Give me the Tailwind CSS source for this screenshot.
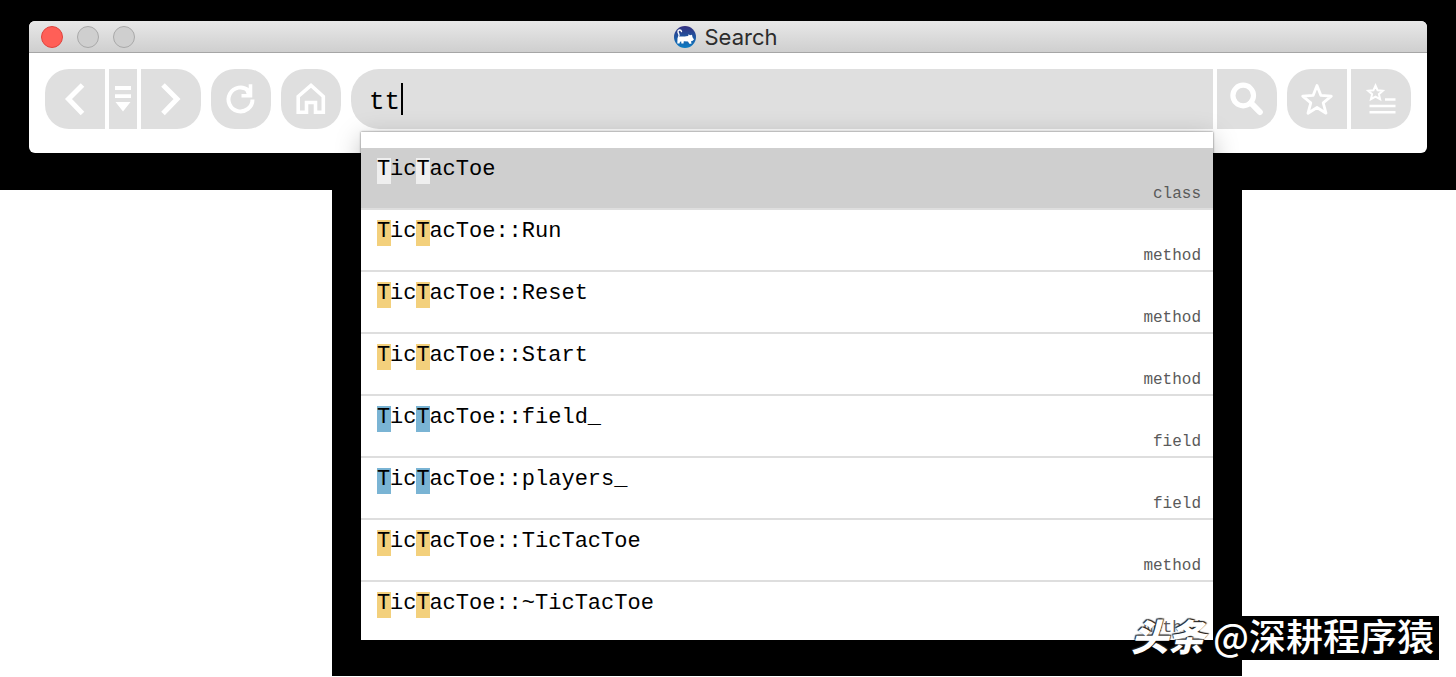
<!DOCTYPE html>
<html lang="en">
<head>
<meta charset="utf-8">
<title>Search</title>
<script src="https://cdn.jsdelivr.net/npm/@tailwindcss/browser@4"></script>
</head>
<body class="relative bg-white font-['Inter','Liberation_Sans',sans-serif] text-black">
<header class="h-[190px] bg-black px-[29px] pt-[21px]">
  <div class="h-[132px] rounded-[6px] bg-white">
    <div class="relative flex h-8 items-center justify-center gap-2 rounded-t-[6px] border-b border-[#a6a6a6] bg-linear-to-b from-[#e8e8e8] to-[#cfcfcf] pr-1">
      <div class="absolute left-3 flex gap-[14px]">
        <button aria-label="Close" class="size-[22px] rounded-full border border-[#e0443e] bg-[#ff5f57]"></button>
        <button aria-label="Minimize" class="size-[22px] rounded-full border border-[#a9a9a9] bg-[#cfcfcf]"></button>
        <button aria-label="Zoom" class="size-[22px] rounded-full border border-[#a9a9a9] bg-[#cfcfcf]"></button>
      </div>
      <svg class="size-[22px]" viewBox="0 0 22 22" aria-hidden="true">
        <defs><linearGradient id="logo" x1="0" y1="0" x2="0" y2="1"><stop offset="0" stop-color="#35307f"/><stop offset="1" stop-color="#0a7cc4"/></linearGradient></defs>
        <circle cx="11" cy="11" r="11" fill="url(#logo)"/>
        <path d="M7.500 5.500C7 3.300 3.800 3.600 4 6C4.200 8 6.300 8 4.500 11.500" fill="none" stroke="#fff" stroke-width="1.400" stroke-linecap="round"/>
        <path d="M3.500 12C5 9.500 9 11 12 10.300L14.200 10L14.500 8.300L16 9.300L18 8.800L18.500 11.200L20 13.500L18.300 15L17 15.200L17.500 17.700H15.300L14 15.500L9.800 15.200L9.500 17.500H7.300L7.300 15.500L6 15.800L5.500 17.500H3.300Z" fill="#fff"/>
      </svg>
      <h1 class="text-[22px] leading-none text-[#2c2c2c]">Search</h1>
    </div>
    <div class="flex gap-[10px] px-4 pt-4">
      <nav class="flex gap-1">
        <button aria-label="Back" class="size-[60px] rounded-l-[24px] bg-[#dfdfdf]">
          <svg class="size-[60px]" viewBox="0 0 60 60" fill="none" stroke="#fff" stroke-width="5"><path d="M37.500 16L23.500 30L37.500 44.500"/></svg>
        </button>
        <button aria-label="History" class="h-[60px] w-7 bg-[#dfdfdf]">
          <svg class="h-[60px] w-7" viewBox="0 0 28 60" fill="#fff"><path d="M6 17H22V21H6ZM6 25.300H22V29H6ZM6.500 33H21.500L14 42.500Z"/></svg>
        </button>
        <button aria-label="Forward" class="size-[60px] rounded-r-[24px] bg-[#dfdfdf]">
          <svg class="size-[60px]" viewBox="0 0 60 60" fill="none" stroke="#fff" stroke-width="5"><path d="M22 16L36 30L22 44.500"/></svg>
        </button>
      </nav>
      <button aria-label="Refresh" class="size-[60px] rounded-[24px] bg-[#dfdfdf]">
        <svg class="size-[60px]" viewBox="0 0 60 60" fill="none" stroke="#fff" stroke-width="4"><path d="M41.500 30.500A12 12 0 1 1 37.500 21.500"/><path d="M30.500 26.700H39.500V15.300" stroke-width="3.600"/><path d="M33 18L39 22V26H36Z" fill="#fff" stroke="none"/></svg>
      </button>
      <button aria-label="Home" class="size-[60px] rounded-[24px] bg-[#dfdfdf]">
        <svg class="size-[60px]" viewBox="0 0 60 60" fill="none" stroke="#fff" stroke-width="3.600"><path d="M17.200 43.200V27.500L30 16.500L42.300 27.500V43.200H34.500V33.500H25.500V43.200Z"/></svg>
      </button>
      <form class="relative flex min-w-0 flex-1 gap-1">
        <label class="flex h-[60px] min-w-0 flex-1 items-center rounded-l-[28px] bg-[#dfdfdf] pl-[18px]">
          <input aria-label="Search query" value="tt" class="h-[60px] w-8 pt-[6px] font-['Liberation_Mono',monospace] text-[26px] outline-none">
          <span class="h-8 w-[2px] bg-black"></span>
        </label>
        <button aria-label="Search" class="size-[60px] rounded-r-[24px] bg-[#dfdfdf]">
          <svg class="size-[60px]" viewBox="0 0 60 60" fill="none" stroke="#fff"><circle cx="26.200" cy="26.500" r="10.300" stroke-width="5.200"/><path d="M34 34L42.800 43" stroke-width="6" stroke-linecap="round"/></svg>
        </button>
        <ul class="absolute top-[63px] right-16 left-[10px] z-10 h-[508px] overflow-hidden bg-white pt-4 font-['Liberation_Mono',monospace] text-[22px] shadow-[0_0_2px_rgba(0,0,0,0.6),0_6px_24px_rgba(0,0,0,0.25)]">
          <li class="flex h-[62px] justify-between border-b-2 border-[#dedede] bg-[#cfcfcf] pt-[10px] pr-3 pl-4"><p class="leading-6"><mark class="-mr-px inline-block h-[26px] w-[14px] bg-[#efefef]">T</mark>ic<mark class="-mr-px inline-block h-[26px] w-[14px] bg-[#efefef]">T</mark>acToe</p><span class="self-end pb-[2px] text-base text-[#5a5a5a]">class</span></li>
          <li class="flex h-[62px] justify-between border-b-2 border-[#dedede] pt-[10px] pr-3 pl-4"><p class="leading-6"><mark class="-mr-px inline-block h-[26px] w-[14px] bg-[#f3d07c]">T</mark>ic<mark class="-mr-px inline-block h-[26px] w-[14px] bg-[#f3d07c]">T</mark>acToe::Run</p><span class="self-end pb-[2px] text-base text-[#5a5a5a]">method</span></li>
          <li class="flex h-[62px] justify-between border-b-2 border-[#dedede] pt-[10px] pr-3 pl-4"><p class="leading-6"><mark class="-mr-px inline-block h-[26px] w-[14px] bg-[#f3d07c]">T</mark>ic<mark class="-mr-px inline-block h-[26px] w-[14px] bg-[#f3d07c]">T</mark>acToe::Reset</p><span class="self-end pb-[2px] text-base text-[#5a5a5a]">method</span></li>
          <li class="flex h-[62px] justify-between border-b-2 border-[#dedede] pt-[10px] pr-3 pl-4"><p class="leading-6"><mark class="-mr-px inline-block h-[26px] w-[14px] bg-[#f3d07c]">T</mark>ic<mark class="-mr-px inline-block h-[26px] w-[14px] bg-[#f3d07c]">T</mark>acToe::Start</p><span class="self-end pb-[2px] text-base text-[#5a5a5a]">method</span></li>
          <li class="flex h-[62px] justify-between border-b-2 border-[#dedede] pt-[10px] pr-3 pl-4"><p class="leading-6"><mark class="-mr-px inline-block h-[26px] w-[14px] bg-[#7ab4d4]">T</mark>ic<mark class="-mr-px inline-block h-[26px] w-[14px] bg-[#7ab4d4]">T</mark>acToe::field_</p><span class="self-end pb-[2px] text-base text-[#5a5a5a]">field</span></li>
          <li class="flex h-[62px] justify-between border-b-2 border-[#dedede] pt-[10px] pr-3 pl-4"><p class="leading-6"><mark class="-mr-px inline-block h-[26px] w-[14px] bg-[#7ab4d4]">T</mark>ic<mark class="-mr-px inline-block h-[26px] w-[14px] bg-[#7ab4d4]">T</mark>acToe::players_</p><span class="self-end pb-[2px] text-base text-[#5a5a5a]">field</span></li>
          <li class="flex h-[62px] justify-between border-b-2 border-[#dedede] pt-[10px] pr-3 pl-4"><p class="leading-6"><mark class="-mr-px inline-block h-[26px] w-[14px] bg-[#f3d07c]">T</mark>ic<mark class="-mr-px inline-block h-[26px] w-[14px] bg-[#f3d07c]">T</mark>acToe::TicTacToe</p><span class="self-end pb-[2px] text-base text-[#5a5a5a]">method</span></li>
          <li class="flex h-[62px] justify-between pt-[10px] pr-3 pl-4"><p class="leading-6"><mark class="-mr-px inline-block h-[26px] w-[14px] bg-[#f3d07c]">T</mark>ic<mark class="-mr-px inline-block h-[26px] w-[14px] bg-[#f3d07c]">T</mark>acToe::~TicTacToe</p><span class="self-end pb-1 text-base text-[#5a5a5a]">method</span></li>
        </ul>
      </form>
      <div class="flex gap-1">
        <button aria-label="Bookmark" class="size-[60px] rounded-l-[24px] bg-[#dfdfdf]">
          <svg class="size-[60px]" viewBox="0 0 60 60" fill="none" stroke="#fff" stroke-width="2.800" stroke-linejoin="round"><path d="M30 16.500L33.800 26.300L44.300 27.100L36.200 33.800L39 44.200L30 38.500L21 44.200L23.800 33.800L15.700 27.100L26.200 26.300Z"/></svg>
        </button>
        <button aria-label="Bookmarks" class="size-[60px] rounded-r-[24px] bg-[#dfdfdf]">
          <svg class="size-[60px]" viewBox="0 0 60 60" fill="none" stroke="#fff" stroke-width="2"><path d="M24.500 16.500L26.600 21.300L31.800 21.800L27.900 25.200L29.100 30.200L24.500 27.600L19.900 30.200L21.100 25.200L17.200 21.800L22.400 21.300Z"/><path d="M34 30.500H44.500M18.500 37H44.500M18.500 43.300H44.500" stroke-width="2.500"/></svg>
        </button>
      </div>
    </div>
  </div>
</header>
<div class="mr-[214px] ml-[332px] h-[486px] bg-black"></div>
<div class="absolute top-[616px] right-[17px] z-20 flex h-11 font-['Noto_Sans_CJK_SC',sans-serif] text-[37px] leading-[38px] whitespace-pre text-white">
  <span class="pr-2 font-black italic [text-shadow:-1px_-1px_1px_#222,1px_-1px_1px_#222]">头条</span><span class="h-11 bg-black pr-[5px] font-medium">@深耕程序猿</span>
</div>
</body>
</html>
